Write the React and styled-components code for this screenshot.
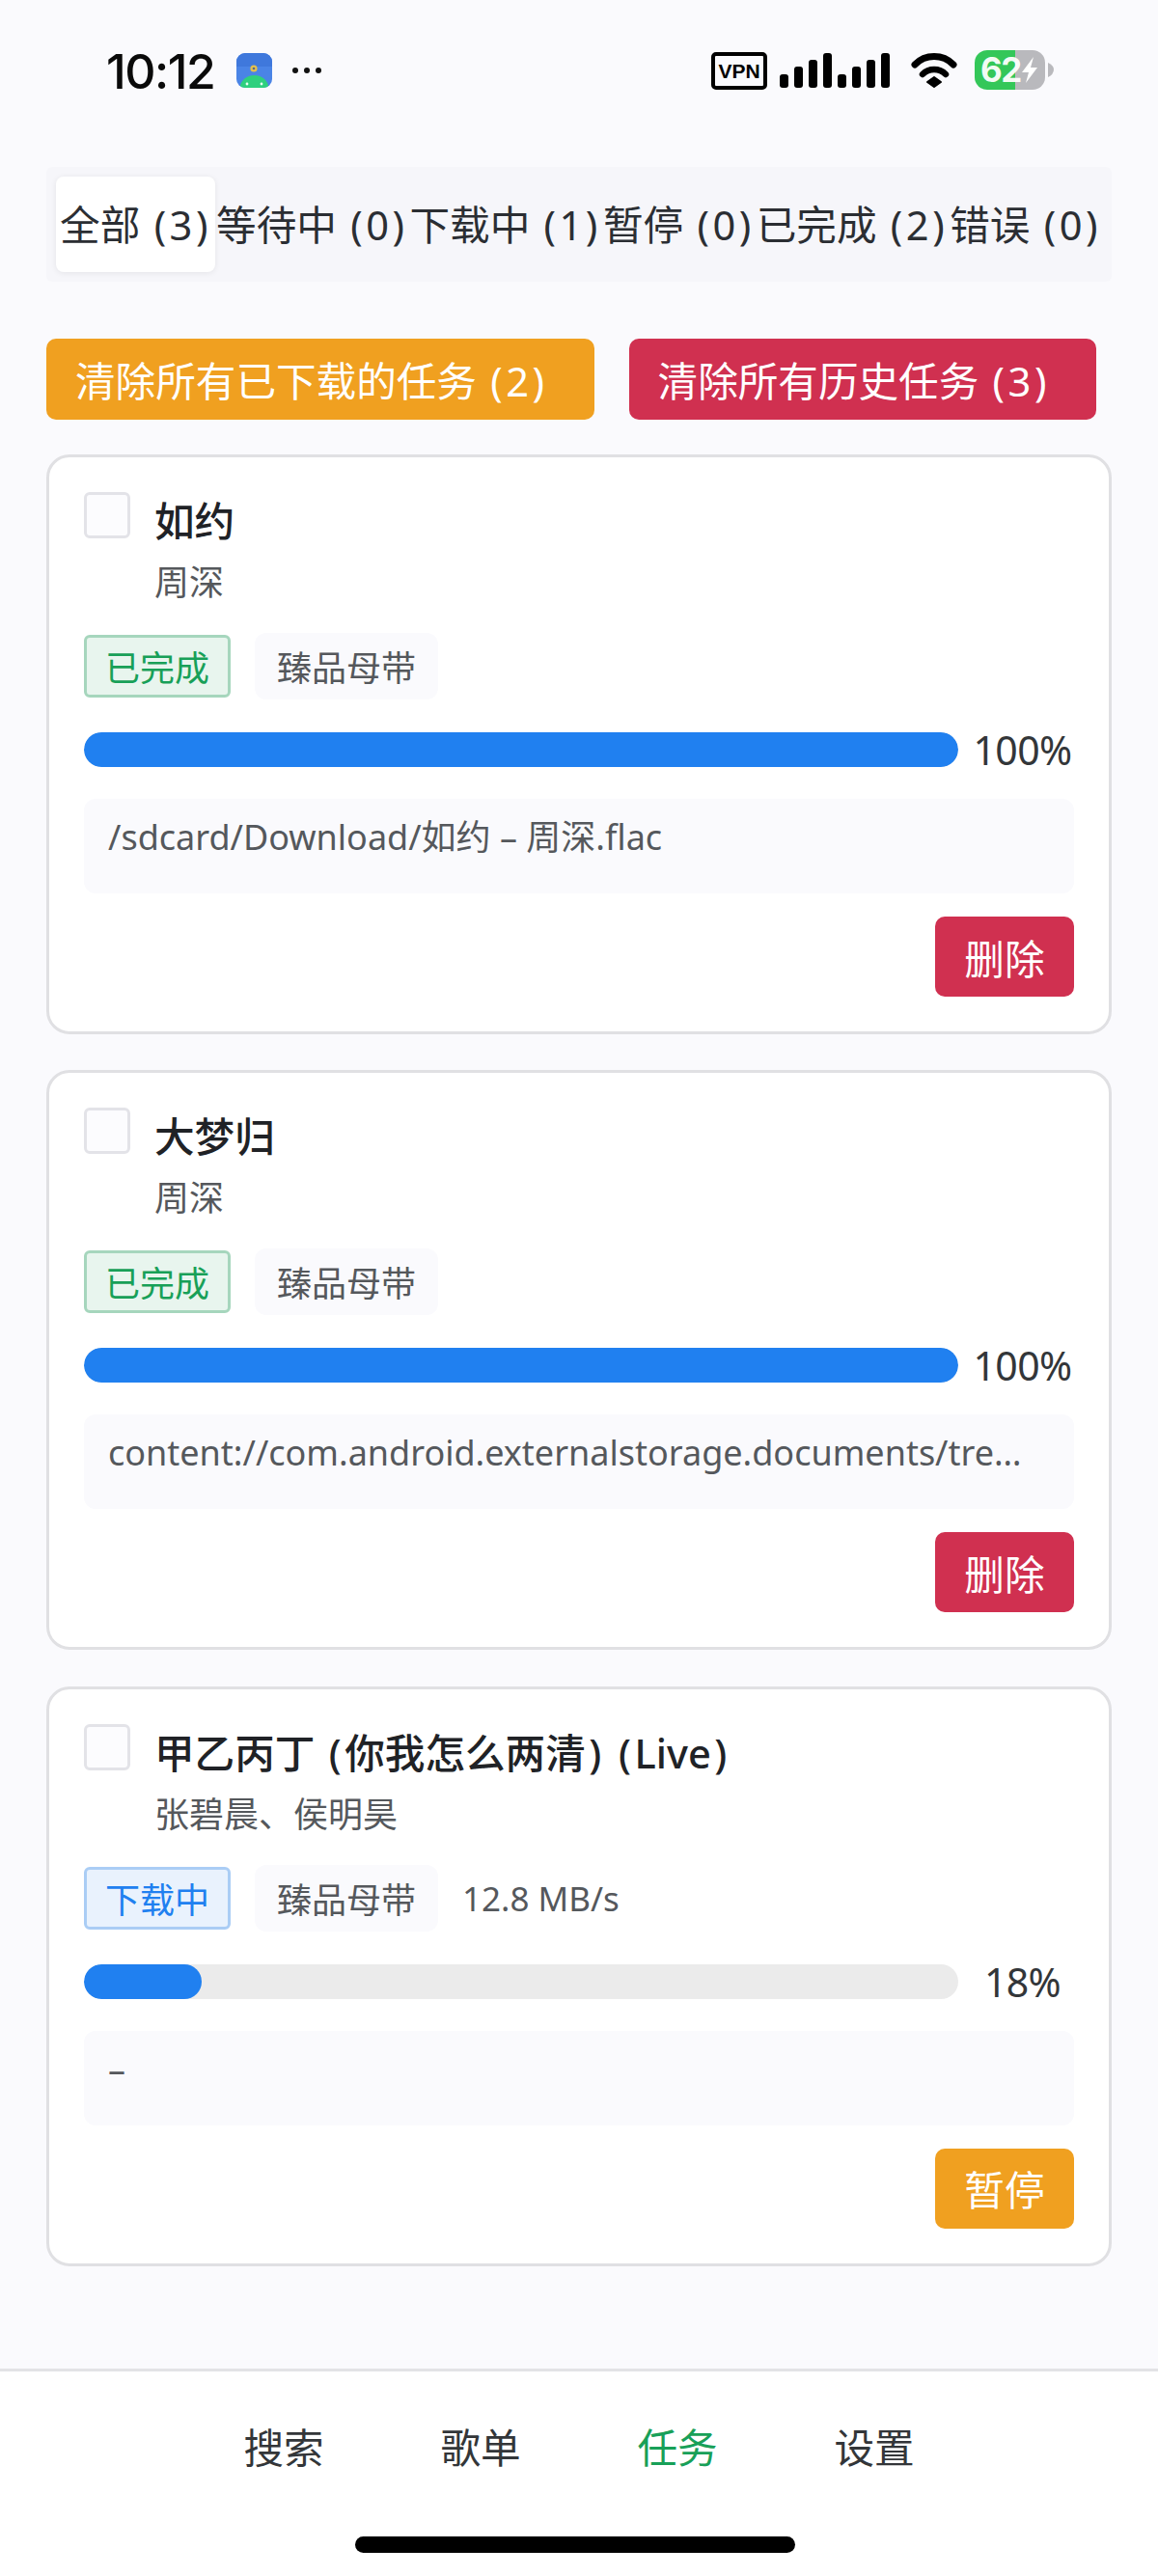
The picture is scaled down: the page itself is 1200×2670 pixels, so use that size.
import React from "react";
import styled, { createGlobalStyle } from "styled-components";

const Global = createGlobalStyle`
  html, body { margin: 0; padding: 0; background: #fafafd; }
  * { box-sizing: border-box; }
  body { font-family: "Noto Sans", "Noto Sans CJK SC", sans-serif; color: #333639; }
`;

const Page = styled.div`
  min-height: 2670px;
  display: flex;
  flex-direction: column;
  background: #fafafd;
`;

const StatusBar = styled.div`
  height: 173px;
  padding: 52px 105px 0 110px;
  display: flex;
  justify-content: space-between;
  align-items: flex-start;
`;
const StatusLeft = styled.div`
  display: flex;
  align-items: center;
  height: 41px;
`;
const Clock = styled.span`
  font-family: Inter, "Noto Sans", sans-serif;
  font-size: 50px;
  line-height: 41px;
  padding-top: 3px;
  font-weight: 500;
  letter-spacing: -1.5px;
  color: #0a0a0a;
  width: 135px;
`;
const Dots = styled.div`
  display: flex;
  gap: 6px;
  margin-left: 21px;
`;
const Dot = styled.i`
  width: 6px;
  height: 6px;
  border-radius: 50%;
  background: #111;
`;
const StatusIcons = styled.svg`
  display: block;
`;

const TabsBar = styled.div`
  margin: 0 48px;
  height: 119px;
  padding: 10px 10px;
  background: #f6f6fa;
  border-radius: 6px;
  display: flex;
`;
const Tab = styled.div`
  flex: 1 1 auto;
  height: 99px;
  min-width: ${(p) => (p.$active ? "165px" : "0")};
  display: flex;
  align-items: center;
  justify-content: center;
  white-space: pre;
  font-size: 41.6px;
  line-height: 60px;
  color: #2b2e33;
  border-radius: 8px;
  background: ${(p) => (p.$active ? "#fff" : "transparent")};
  box-shadow: ${(p) => (p.$active ? "0 1px 6px rgba(0,0,0,0.08)" : "none")};
`;
const Paren = styled.span`
  margin: 0 3.5px;
`;

const BulkRow = styled.div`
  margin: 59px 48px 0;
  display: flex;
  gap: 36px;
`;
const Btn = styled.div`
  height: 84px;
  padding: 0 30px;
  display: flex;
  align-items: center;
  justify-content: center;
  color: #fff;
  font-size: 41.6px;
  white-space: pre;
  border-radius: 10px;
  background: ${(p) => (p.$kind === "warn" ? "#f0a020" : "#d03050")};
`;
const BulkBtn = styled(Btn)`
  padding-right: 48px;
`;
const CardBtn = styled(Btn)`
  height: 83px;
  padding: 0 30.5px;
`;

const List = styled.div`
  margin: 36px 48px 0;
  display: flex;
  flex-direction: column;
  gap: 37.3px;
`;
const Card = styled.div`
  background: #fff;
  border: 3px solid #e0e0e3;
  border-radius: 24px;
  padding: 36px 36px 36px;
`;
const Head = styled.div`
  display: flex;
  gap: 25px;
  align-items: flex-start;
`;
const Check = styled.div`
  width: 48px;
  height: 48px;
  flex: none;
  border: 3px solid #e3e3e8;
  border-radius: 6px;
  background: #fcfcfe;
`;
const Title = styled.div`
  display: flex;
  white-space: pre;
  font-size: 41.6px;
  line-height: 60px;
  font-weight: 500;
  color: #202226;
`;
const Artist = styled.div`
  margin-top: 10px;
  font-size: 36px;
  line-height: 48px;
  color: #55585c;
`;
const Tags = styled.div`
  margin-top: 28px;
  display: flex;
  align-items: center;
  gap: 25px;
  height: 69px;
`;
const StatusTag = styled.div`
  height: 65px;
  padding: 0 19px;
  display: flex;
  align-items: center;
  font-size: 36px;
  border-radius: 6px;
  border: 3px solid ${(p) => (p.$kind === "info" ? "#aacdf5" : "#a6d6bd")};
  background: ${(p) => (p.$kind === "info" ? "#e9f2fd" : "#e8f5ee")};
  color: ${(p) => (p.$kind === "info" ? "#2080f0" : "#18a058")};
`;
const QualityTag = styled.div`
  height: 69px;
  padding: 0 23px;
  display: flex;
  align-items: center;
  font-size: 36px;
  border-radius: 12px;
  background: #fafafd;
  color: #55585c;
`;
const Speed = styled.span`
  font-size: 35px;
  color: #55585c;
`;
const ProgressRow = styled.div`
  margin-top: 34px;
  display: flex;
  align-items: center;
  gap: 13px;
`;
const Track = styled.div`
  flex: 1;
  height: 36px;
  border-radius: 18px;
  background: #ebebeb;
  overflow: hidden;
`;
const Fill = styled.div`
  height: 100%;
  border-radius: 18px;
  background: #2080f0;
`;
const Pct = styled.div`
  width: 107px;
  flex: none;
  text-align: center;
  font-size: 41px;
  line-height: 36px;
  letter-spacing: -0.6px;
  color: #333639;
`;
const PathBox = styled.div`
  margin-top: 33px;
  height: 98px;
  padding: 10px 38px 0 25px;
  border-radius: 12px;
  background: #fafafd;
  font-size: 36px;
  line-height: 60px;
  color: #55585c;
  white-space: nowrap;
  overflow: hidden;
  text-overflow: ellipsis;
`;
const Actions = styled.div`
  margin-top: 24px;
  display: flex;
  justify-content: flex-end;
`;

const Nav = styled.div`
  margin-top: auto;
  height: 215px;
  border-top: 3px solid #e3e3e6;
  background: #fff;
  display: flex;
  flex-direction: column;
  align-items: center;
`;
const NavItems = styled.div`
  margin-top: 49px;
  display: grid;
  grid-template-columns: repeat(4, 204px);
`;
const NavItem = styled.div`
  text-align: center;
  font-size: 41.6px;
  line-height: 60px;
  color: ${(p) => (p.$active ? "#18a058" : "#333639")};
`;
const HomeBar = styled.div`
  margin-top: 62px;
  margin-right: 8px;
  width: 456px;
  height: 17px;
  border-radius: 9px;
  background: #000;
`;

const AppIcon = () => (
  <svg width="37" height="36" viewBox="0 0 37 36" style={{ display: "block" }}>
    <defs>
      <clipPath id="ai"><rect width="37" height="36" rx="9" /></clipPath>
    </defs>
    <g clipPath="url(#ai)">
      <rect width="37" height="36" fill="#4a84e6" />
      <rect width="37" height="14" fill="#3f78dc" />
      <ellipse cx="18.5" cy="37" rx="15" ry="14" fill="#2ed07e" />
      <circle cx="11" cy="32" r="1.4" fill="#e8fff2" />
      <circle cx="26" cy="32" r="1.4" fill="#e8fff2" />
      <circle cx="18" cy="16" r="3.6" fill="#e3c04e" />
      <circle cx="18" cy="16" r="1.3" fill="#5a6a8a" />
    </g>
  </svg>
);

const barHeights = [14, 22, 29, 36];
const Indicators = () => (
  <StatusIcons width="358" height="42" viewBox="0 0 358 42">
    <rect x="2" y="4" width="54" height="35" rx="3" fill="none" stroke="#000" strokeWidth="4" />
    <text x="29" y="29" textAnchor="middle" fontFamily="Liberation Sans, sans-serif" fontSize="21" fontWeight="700" fill="#000">VPN</text>
    {[71, 86, 101, 116, 131, 146, 161, 176].map((x, i) => {
      const h = barHeights[i % 4];
      return <rect key={x} x={x} y={39 - h} width="9" height={h} rx="3" fill="#000" />;
    })}
    <path d="M211 15 A28 28 0 0 1 251 15" fill="none" stroke="#000" strokeWidth="7" strokeLinecap="round" />
    <path d="M219 25 A17 17 0 0 1 243 25" fill="none" stroke="#000" strokeWidth="6.5" strokeLinecap="round" />
    <path d="M224 33 L231 28 L238 33 L231 38 Z" fill="#000" strokeLinejoin="round" stroke="#000" strokeWidth="2" />
    <defs>
      <clipPath id="bat"><rect x="273" y="0" width="73" height="41" rx="13" /></clipPath>
    </defs>
    <g clipPath="url(#bat)">
      <rect x="273" y="0" width="42" height="41" fill="#34c759" />
      <rect x="315" y="0" width="31" height="41" fill="#b9b9bd" />
    </g>
    <path d="M349 13 Q355 16 355 20 Q355 25 349 28 Z" fill="#b9b9bd" />
    <text x="279" y="33" fontFamily="Inter, sans-serif" fontSize="35" fontWeight="700" letterSpacing="-1.5" fill="#fff" fillOpacity="0.95">62</text>
    <path d="M334 7 L322 23 L329 23 L326 34 L338 18 L331 18 Z" fill="#fff" />
  </StatusIcons>
);

const withParens = (text) =>
  text.split(/([()])/).map((part, i) =>
    part === "(" || part === ")" ? <Paren key={i}>{part}</Paren> : part
  );

const tabs = [
  ["全部 (3)", true],
  ["等待中 (0)"],
  ["下载中 (1)"],
  ["暂停 (0)"],
  ["已完成 (2)"],
  ["错误 (0)"],
];

const tasks = [
  { title: "如约", artist: "周深", status: "已完成", kind: "ok", fill: 100, pct: "100%", path: "/sdcard/Download/如约 – 周深.flac", action: "删除" },
  { title: "大梦归", artist: "周深", status: "已完成", kind: "ok", fill: 100, pct: "100%", path: "content://com.android.externalstorage.documents/tree/primary%3ADownload/document/primary", action: "删除" },
  { title: "甲乙丙丁 (你我怎么两清) (Live)", artist: "张碧晨、侯明昊", status: "下载中", kind: "info", speed: "12.8 MB/s", fill: 13.5, pct: "18%", path: "–", action: "暂停", warn: true },
];

export default function App() {
  return (
    <Page>
      <Global />
      <StatusBar>
        <StatusLeft>
          <Clock>10:12</Clock>
          <AppIcon />
          <Dots><Dot /><Dot /><Dot /></Dots>
        </StatusLeft>
        <Indicators />
      </StatusBar>
      <TabsBar>
        {tabs.map(([t, a]) => <Tab key={t} $active={a}><span>{withParens(t)}</span></Tab>)}
      </TabsBar>
      <BulkRow>
        <BulkBtn $kind="warn"><span>{withParens("清除所有已下载的任务 (2)")}</span></BulkBtn>
        <BulkBtn><span>{withParens("清除所有历史任务 (3)")}</span></BulkBtn>
      </BulkRow>
      <List>
        {tasks.map((t) => (
          <Card key={t.title}>
            <Head>
              <Check />
              <div>
                <Title><span>{withParens(t.title)}</span></Title>
                <Artist>{t.artist}</Artist>
              </div>
            </Head>
            <Tags>
              <StatusTag $kind={t.kind}>{t.status}</StatusTag>
              <QualityTag>臻品母带</QualityTag>
              {t.speed && <Speed>{t.speed}</Speed>}
            </Tags>
            <ProgressRow>
              <Track><Fill style={{ width: `${t.fill}%` }} /></Track>
              <Pct>{t.pct}</Pct>
            </ProgressRow>
            <PathBox>{t.path}</PathBox>
            <Actions>
              <CardBtn $kind={t.warn ? "warn" : undefined}>{t.action}</CardBtn>
            </Actions>
          </Card>
        ))}
      </List>
      <Nav>
        <NavItems>
          <NavItem>搜索</NavItem>
          <NavItem>歌单</NavItem>
          <NavItem $active>任务</NavItem>
          <NavItem>设置</NavItem>
        </NavItems>
        <HomeBar />
      </Nav>
    </Page>
  );
}
